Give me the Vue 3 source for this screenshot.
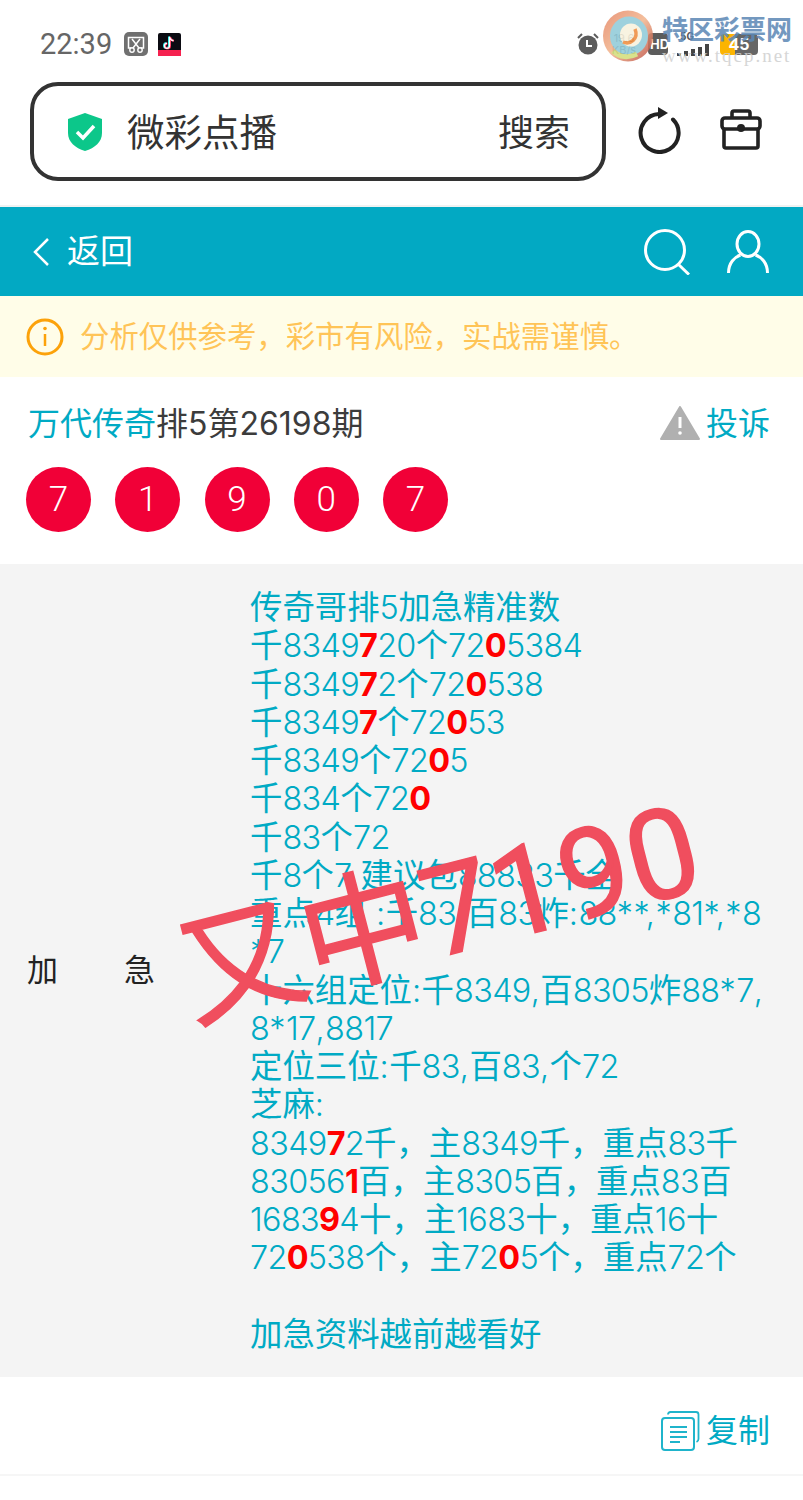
<template>
  <div class="page">
    <div class="status-bar">
      <div class="status-left">
        <span class="clock">22:39</span>
        <svg class="app-icon" width="24" height="24" viewBox="0 0 24 24">
          <rect width="24" height="24" rx="5" fill="#707070" />
          <path d="M7 16H4.500V5.500h15V16H17" fill="none" stroke="#fff" stroke-width="1.500" />
          <path d="M8 7l7 9M16 7l-7 9" stroke="#fff" stroke-width="1.500" />
          <circle cx="8" cy="18" r="2.200" fill="none" stroke="#fff" stroke-width="1.400" />
          <circle cx="16" cy="18" r="2.200" fill="none" stroke="#fff" stroke-width="1.400" />
        </svg>
        <svg class="app-icon" width="23" height="23" viewBox="0 0 23 23">
          <rect width="23" height="23" rx="2" fill="#0b0b12" />
          <rect y="17" width="23" height="6" fill="#f5214f" />
          <path d="M11 3.500v9a2.500 2.500 0 1 1-2.500-2.500M11 3.500c.5 2.300 2 3.600 4 3.800" fill="none" stroke="#25f4ee" stroke-width="2" />
          <path d="M12 4v9a2.500 2.500 0 1 1-2.500-2.500M12 4c.5 2.300 2 3.600 4 3.800" fill="none" stroke="#fe2c55" stroke-width="2" />
          <path d="M11.500 3.800v9a2.500 2.500 0 1 1-2.500-2.500M11.500 3.800c.5 2.300 2 3.600 4 3.800" fill="none" stroke="#fff" stroke-width="1.300" />
        </svg>
      </div>
      <div class="status-right">
        <svg width="24" height="24" viewBox="0 0 24 24">
          <circle cx="12" cy="13" r="9.500" fill="#5c5c5c" />
          <path d="M11 8v6h5" fill="none" stroke="#fff" stroke-width="2" />
          <path d="M2 6l4-4M22 6l-4-4" stroke="#5c5c5c" stroke-width="2" />
        </svg>
        <span class="speed">19.6<br />KB/s</span>
        <span class="hd">HD</span>
        <div class="signal-wrap">
          <span class="five-g">5G</span>
          <span class="signal"><i></i><i></i><i></i><i></i><i></i></span>
        </div>
        <span class="battery">45</span>
      </div>
    </div>

    <div class="address-row">
      <div class="address-box">
        <svg width="36" height="38" viewBox="0 0 36 38">
          <path d="M18 0l17 6v14c0 9-7 15-17 18C8 35 1 29 1 20V6z" fill="#0cc78a" />
          <path d="M10 19l6 6 11-12" fill="none" stroke="#fff" stroke-width="3.500" />
        </svg>
        <span class="address-text">微彩点播</span>
        <span class="address-search">搜索</span>
      </div>
      <svg class="refresh" width="46" height="48" viewBox="0 0 46 48">
        <path d="M36 13.500A19 19 0 1 1 22 8" fill="none" stroke="#222" stroke-width="4" stroke-linecap="round" />
        <path d="M21 1l10 6-10 6z" fill="#222" />
      </svg>
      <svg class="toolbox" width="44" height="42" viewBox="0 0 44 42">
        <path d="M13 9V4a2 2 0 0 1 2-2h14a2 2 0 0 1 2 2v5" fill="none" stroke="#222" stroke-width="3.600" />
        <rect x="3" y="9" width="38" height="11" rx="3" fill="none" stroke="#222" stroke-width="3.600" />
        <path d="M5 20v17a2 2 0 0 0 2 2h30a2 2 0 0 0 2-2V20" fill="none" stroke="#222" stroke-width="3.600" />
        <circle cx="22" cy="19" r="4" fill="#222" />
      </svg>
    </div>

    <div class="nav-bar">
      <div class="nav-left">
        <svg width="20" height="32" viewBox="0 0 20 32">
          <path d="M17 3L4 16l13 13" fill="none" stroke="#fff" stroke-width="2.500" />
        </svg>
        <span>返回</span>
      </div>
      <div class="nav-right">
        <svg width="46" height="46" viewBox="0 0 46 46">
          <circle cx="21" cy="21" r="19.500" fill="none" stroke="#fff" stroke-width="3" />
          <path d="M34 35l11 10.500" stroke="#fff" stroke-width="3" />
        </svg>
        <svg width="42" height="44" viewBox="0 0 42 44">
          <ellipse cx="21" cy="14" rx="11" ry="12.500" fill="none" stroke="#fff" stroke-width="3" />
          <path d="M1.500 43c0-10 6-16 12-18M40.500 43c0-10-6-16-12-18" fill="none" stroke="#fff" stroke-width="3" />
        </svg>
      </div>
    </div>

    <div class="notice">
      <svg width="38" height="38" viewBox="0 0 38 38">
        <circle cx="19" cy="19" r="17" fill="none" stroke="#fca20a" stroke-width="3" />
        <path d="M19 16v12" stroke="#fca20a" stroke-width="2.500" />
        <circle cx="19" cy="10.500" r="1.800" fill="#fca20a" />
      </svg>
      <span>分析仅供参考，彩市有风险，实战需谨慎。</span>
    </div>

    <div class="issue">
      <div class="issue-head">
        <div class="issue-title"><span class="teal">万代传奇</span>排5第26198期</div>
        <div class="report">
          <svg width="40" height="34" viewBox="0 0 40 34">
            <path d="M20 1L39 33H1z" fill="#b0b0b0" stroke="#b0b0b0" stroke-width="2" stroke-linejoin="round" />
            <path d="M20 11v11" stroke="#fff" stroke-width="3" />
            <circle cx="20" cy="27" r="1.800" fill="#fff" />
          </svg>
          <span>投诉</span>
        </div>
      </div>
      <div class="balls">
        <span v-for="(n, i) in balls" :key="i" class="ball">{{ n }}</span>
      </div>
    </div>

    <div class="plan">
      <div class="plan-label"><span>加</span><span>急</span></div>
      <div class="plan-body">
        <div v-for="(line, i) in lines" :key="i" class="plan-line">
          <template v-for="(part, j) in parse(line)" :key="j">
            <b v-if="part.type === 'hit'">{{ part.text }}</b>
            <span v-else-if="part.type === 'num'" class="num">{{ part.text }}</span>
            <span v-else-if="part.type === 'sym'" class="sym">{{ part.text }}</span>
            <template v-else>{{ part.text }}</template>
          </template>
        </div>
      </div>
    </div>

    <div class="copy-row">
      <svg width="39" height="40" viewBox="0 0 39 40">
        <path d="M7 3.500C7 2 8 1 9.500 1H35c1.500 0 2.500 1 2.500 2.500V28c0 1.500-1 2.500-2 3" fill="none" stroke="#1fb4cb" stroke-width="1.800" />
        <rect x="1" y="7" width="32" height="32" rx="3" fill="none" stroke="#1fb4cb" stroke-width="2" />
        <path d="M9 16h17M9 21h17M9 26h17M9 31h10" stroke="#1fb4cb" stroke-width="1.800" />
      </svg>
      <span>复制</span>
    </div>

    <div class="stamp">又中7190</div>

    <div class="watermark">
      <svg width="52" height="52" viewBox="0 0 52 52">
        <defs>
          <linearGradient id="egg" x1="0" y1="0" x2="1" y2="1">
            <stop offset="0" stop-color="#e48463" />
            <stop offset="0.500" stop-color="#f2b48c" />
            <stop offset="1" stop-color="#b9463c" />
          </linearGradient>
        </defs>
        <ellipse cx="26" cy="26" rx="25" ry="25.500" fill="url(#egg)" />
        <ellipse cx="27" cy="26" rx="19" ry="19.500" fill="#8ec9d8" />
        <ellipse cx="29" cy="25" rx="11" ry="11.500" fill="#f7f1dc" />
        <path d="M21 32c7 3 16-3 12-13" fill="none" stroke="#ee8a3a" stroke-width="3.500" />
        <path d="M11 41c7 7 16 7 24 3" fill="none" stroke="#d3dd78" stroke-width="5" />
      </svg>
      <div class="wm-text">
        <span class="wm-title">特区彩票网</span>
        <span class="wm-url">www.tqcp.net</span>
      </div>
    </div>
  </div>
</template>

<script setup>
const balls = [7, 1, 9, 0, 7]

const lines = [
  '传奇哥排5加急精准数',
  '千8349[7]20个72[0]5384',
  '千8349[7]2个72[0]538',
  '千8349[7]个72[0]53',
  '千8349个72[0]5',
  '千834个72[0]',
  '千83个72',
  '千8个7 建议包88833千全',
  '重点4组 :千83,百83炸:88**,*81*,*8',
  '*7',
  '十六组定位:千8349,百8305炸88*7,',
  '8*17,8817',
  '定位三位:千83,百83,个72',
  '芝麻:',
  '8349[7]2千，主8349千，重点83千',
  '83056[1]百，主8305百，重点83百',
  '1683[9]4十，主1683十，重点16十',
  '72[0]538个，主72[0]5个，重点72个',
  '\u00a0',
  '加急资料越前越看好',
]

// [n] marks a hit digit; digits and symbols get their own spacing next to the CJK text
function parse(line) {
  return line
    .split(/(\[\d\]|\d+|[*,:]+)/)
    .filter(Boolean)
    .map((s) => {
      if (s[0] === '[') return { text: s[1], type: 'hit' }
      if (/^\d+$/.test(s)) return { text: s, type: 'num' }
      if (/^[*,:]+$/.test(s)) return { text: s, type: 'sym' }
      return { text: s, type: 'text' }
    })
}
</script>

<style>
body {
  margin: 0;
  background: #fff;
}
</style>

<style scoped>
.page {
  position: relative;
  width: 803px;
  height: 1500px;
  overflow: hidden;
  background: #fff;
  font-family: Inter, "Noto Sans CJK SC", sans-serif;
  color: #3c3c3c;
}

.status-bar {
  height: 82px;
  box-sizing: border-box;
  padding: 30px 45px 0 40px;
  display: flex;
  justify-content: space-between;
  align-items: flex-start;
}

.status-left {
  display: flex;
  align-items: center;
  gap: 10px;
  height: 28px;
}

.clock {
  font-family: Roboto, sans-serif;
  font-size: 29px;
  color: #666;
  margin-right: 2px;
}

.status-right {
  display: flex;
  align-items: center;
  height: 28px;
  margin-left: auto;
}

.speed {
  font-size: 11px;
  line-height: 12px;
  color: #777;
  width: 36px;
  margin: 0 6px;
  text-align: center;
}

.hd {
  background: #5c5c5c;
  color: #fff;
  font-size: 13px;
  font-weight: 700;
  border-radius: 4px;
  padding: 3px 2px;
  line-height: 16px;
  width: 20px;
  box-sizing: border-box;
  overflow: hidden;
}

.signal-wrap {
  width: 40px;
  margin: 0 0 0 9px;
  height: 24px;
  position: relative;
}

.five-g {
  position: absolute;
  left: 3px;
  top: -1px;
  font-size: 10px;
  line-height: 10px;
  font-weight: 700;
  color: #555;
}

.signal {
  position: absolute;
  left: 0;
  bottom: 0;
  display: flex;
  align-items: flex-end;
  gap: 3px;
}

.signal i {
  width: 4px;
  background: #444;
}
.signal i:nth-child(1) { height: 3px; }
.signal i:nth-child(2) { height: 5px; }
.signal i:nth-child(3) { height: 7px; }
.signal i:nth-child(4) { height: 9px; }
.signal i:nth-child(5) { height: 12px; }

.battery {
  background: linear-gradient(90deg, #fcb400 40%, #666 40%);
  color: #fff;
  font-size: 16px;
  font-weight: 700;
  line-height: 21px;
  width: 38px;
  box-sizing: border-box;
  border-radius: 4px;
  text-align: center;
  margin-left: 3px;
}

.address-row {
  height: 125px;
  box-sizing: border-box;
  border-bottom: 2px solid #f0f2f2;
  padding-left: 30px;
  display: flex;
  align-items: flex-start;
}

.address-box {
  width: 576px;
  height: 99px;
  box-sizing: border-box;
  border: 4px solid #333;
  border-radius: 28px;
  display: flex;
  align-items: center;
  padding: 0 32px 0 33px;
  font-size: 37.500px;
  color: #333;
  margin-right: 31px;
}

.address-text {
  margin-left: 24px;
  margin-bottom: 4px;
  flex: 1;
}

.address-search {
  font-size: 36px;
  margin-bottom: 4px;
}

.refresh {
  margin-top: 24px;
}

.toolbox {
  margin-top: 27px;
  margin-left: 36px;
}

.nav-bar {
  height: 89px;
  background: #02a9c3;
  color: #fff;
  display: flex;
  justify-content: space-between;
  align-items: center;
  padding: 0 34px 0 31px;
}

.nav-left {
  display: flex;
  align-items: center;
  gap: 16px;
  font-size: 33px;
}

.nav-left span {
  margin-bottom: 5px;
}

.nav-right {
  display: flex;
  align-items: center;
  gap: 37px;
}

.notice {
  height: 81px;
  background: #fffde8;
  display: flex;
  align-items: center;
  gap: 16px;
  padding-left: 26px;
  font-size: 29.400px;
  color: #ffc457;
}

.notice span {
  margin-bottom: 5px;
}

.issue {
  height: 187px;
  box-sizing: border-box;
  padding: 24px 33px 0 28px;
}

.issue-head {
  display: flex;
  justify-content: space-between;
  align-items: center;
  height: 44px;
}

.issue-title {
  font-size: 32px;
  margin-bottom: 5px;
}

.teal {
  color: #00aac4;
}

.report {
  display: flex;
  align-items: center;
  gap: 6px;
  font-size: 32px;
  color: #00aac4;
}

.report span {
  margin-bottom: 4px;
}

.balls {
  display: flex;
  gap: 24.250px;
  margin-top: 22px;
  margin-left: -2px;
}

.ball {
  width: 65px;
  height: 65px;
  border-radius: 50%;
  background: #f10037;
  color: #fff;
  font-family: Roboto, sans-serif;
  font-weight: 300;
  font-size: 35px;
  display: flex;
  align-items: center;
  justify-content: center;
}

.plan {
  height: 813px;
  box-sizing: border-box;
  background: #f4f4f4;
  display: flex;
  align-items: center;
  padding-left: 27px;
}

.plan-label {
  width: 128px;
  display: flex;
  justify-content: space-between;
  font-size: 31px;
  color: #222;
  margin-right: 95px;
  margin-bottom: 6px;
}

.plan-body {
  font-size: 32.400px;
  line-height: 38.250px;
  color: #00aac4;
  white-space: nowrap;
  margin-top: 2px;
}

.plan-body .num {
  font-weight: 300;
  letter-spacing: -0.650px;
}

.plan-body .sym {
  font-weight: 300;
  letter-spacing: 0.500px;
}

.plan-body b {
  color: #f00;
  font-weight: 700;
  letter-spacing: -0.800px;
}

.copy-row {
  height: 99px;
  box-sizing: border-box;
  border-bottom: 2px solid #f6f6f6;
  display: flex;
  justify-content: flex-end;
  align-items: center;
  gap: 6px;
  padding: 4px 33px 0 0;
  font-size: 32px;
  color: #00aac4;
}

.copy-row svg {
  margin-top: 6px;
}

.stamp {
  position: absolute;
  left: 174px;
  top: 839px;
  font-family: Roboto, "Noto Sans CJK SC", sans-serif;
  font-size: 125px;
  line-height: 150px;
  color: #f04e5e;
  white-space: nowrap;
  transform: rotate(-14.500deg);
  -webkit-text-stroke: 1.500px #f04e5e;
}

.watermark {
  position: absolute;
  left: 602px;
  top: 10px;
  display: flex;
  opacity: 0.85;
}

.wm-text {
  display: flex;
  flex-direction: column;
  margin-left: 8px;
  white-space: nowrap;
  padding-top: 4px;
}

.wm-title {
  font-size: 26px;
  line-height: 32px;
  font-weight: 700;
  color: #5b87b5;
}

.wm-url {
  font-family: "Liberation Serif", serif;
  font-size: 19px;
  line-height: 20px;
  letter-spacing: 2px;
  color: #d0d0d0;
}
</style>
